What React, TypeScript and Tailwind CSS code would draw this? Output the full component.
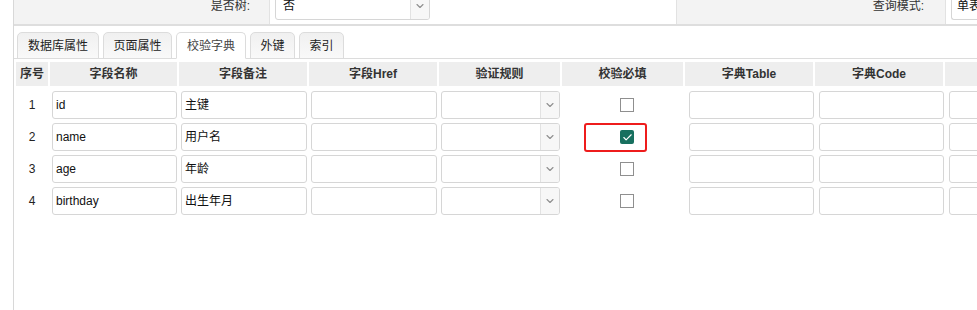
import { ChevronDown, Check } from "lucide-react";

const font = { fontFamily: '"Liberation Sans", "Noto Sans CJK SC", sans-serif' };

const tabs = ["数据库属性", "页面属性", "校验字典", "外键", "索引"];
const tabWidths = ["w-[82px]", "w-[69px]", "w-[70px]", "w-[45px]", "w-[45px]"];

const headers = [
  { label: "序号", w: "w-[32px]" },
  { label: "字段名称", w: "w-[127px]" },
  { label: "字段备注", w: "w-[128px]" },
  { label: "字段Href", w: "w-[128px]" },
  { label: "验证规则", w: "w-[121px]" },
  { label: "校验必填", w: "w-[121px]" },
  { label: "字典Table", w: "w-[128px]" },
  { label: "字典Code", w: "w-[128px]" },
  { label: "", w: "w-[60px]" },
];

const rows = [
  { no: 1, name: "id", remark: "主键", checked: false },
  { no: 2, name: "name", remark: "用户名", checked: true },
  { no: 3, name: "age", remark: "年龄", checked: false },
  { no: 4, name: "birthday", remark: "出生年月", checked: false },
];

function TextBox({ value, className }: { value?: string; className: string }) {
  return (
    <div
      className={`h-[28px] shrink-0 rounded-[3px] border border-[#d6d6d6] bg-white pl-[3px] text-[12px] leading-[26px] text-[#111] ${className}`}
    >
      {value}
    </div>
  );
}

function SelectBox({ value, className }: { value?: string; className: string }) {
  return (
    <div
      className={`flex h-[28px] shrink-0 overflow-hidden rounded-[3px] border border-[#d6d6d6] bg-white ${className}`}
    >
      <div className="flex-1 pl-[7px] text-[12px] leading-[26px] text-[#111]">{value}</div>
      <div className="flex w-[19px] items-center justify-center border-l border-[#e2e2e2] bg-[#f7f7f7]">
        <ChevronDown className="h-[12px] w-[12px] text-[#8e8e8e]" strokeWidth={2.2} />
      </div>
    </div>
  );
}

export default function App() {
  return (
    <div className="flex h-[310px] w-[977px] overflow-hidden bg-white text-[#333]" style={font}>
      <div className="w-[13px] shrink-0" />
      <div className="flex min-w-0 flex-1 flex-col border-l border-[#d8d8d8]">
        {/* top form row */}
        <div className="flex h-[26px] shrink-0 overflow-hidden border-b-2 border-[#dedede]">
          <div className="-mt-[12px] flex h-[36px] w-full items-center">
            <div className="flex h-full w-[255px] shrink-0 items-center justify-end bg-[#f3f3f3] pr-[19px] text-[12px]">
              是否树:
            </div>
            <div className="flex h-full w-[407px] shrink-0 items-center border-l border-[#e2e2e2] pl-[5px]">
              <SelectBox value="否" className="w-[155px]" />
            </div>
            <div className="flex h-full w-[269px] shrink-0 items-center justify-end border-l border-[#e2e2e2] bg-[#f3f3f3] pr-[21px] text-[12px]">
              查询模式:
            </div>
            <div className="flex h-full min-w-0 flex-1 items-center overflow-hidden border-l border-[#e2e2e2] pl-[5px]">
              <div className="h-[28px] w-[60px] shrink-0 rounded-l-[3px] border border-r-0 border-[#d6d6d6] pl-[5px] text-[12px] leading-[26px] text-[#111]">
                单表
              </div>
            </div>
          </div>
        </div>

        {/* tabs */}
        <div className="flex h-[33px] shrink-0 items-end gap-[4px] border-b border-[#dcdcdc] pl-[3px]">
          {tabs.map((t, i) => (
            <div
              key={t}
              className={`-mb-px flex h-[27px] items-center justify-center rounded-t-[5px] border border-[#dcdcdc] text-[12px] ${tabWidths[i]} ${
                i === 2 ? "border-b-white bg-white text-[#444]" : "bg-gradient-to-b from-[#f0f0f0] to-[#f9f9f9] text-[#222]"
              }`}
            >
              {t}
            </div>
          ))}
        </div>

        {/* header */}
        <div className="mt-[3px] flex gap-[2px] pl-[2px]">
          {headers.map((h, i) => (
            <div
              key={i}
              className={`flex h-[24px] shrink-0 items-center justify-center bg-[#eeeeee] text-[12px] font-bold text-[#333] ${h.w}`}
            >
              {h.label}
            </div>
          ))}
        </div>

        {/* body */}
        <div className="mt-[3px] flex flex-col">
          {rows.map((r) => (
            <div key={r.no} className="flex h-[32px] items-center pl-[2px]">
              <div className="w-[32px] shrink-0 text-center text-[12px] text-[#222]">{r.no}</div>
              <TextBox value={r.name} className="ml-[4px] w-[125px]" />
              <TextBox value={r.remark} className="ml-[4px] w-[126px]" />
              <TextBox className="ml-[4px] w-[126px]" />
              <SelectBox className="ml-[4px] w-[119px]" />
              <div className="flex w-[129px] shrink-0 items-center justify-start pl-[24px]">
                <div
                  className={`flex h-[29px] w-[63px] items-center justify-end rounded-[3px] border-2 pr-[11px] ${
                    r.checked ? "border-[#ee1c1c]" : "border-transparent"
                  }`}
                >
                  {r.checked ? (
                    <div className="flex h-[14px] w-[14px] items-center justify-center rounded-[2px] bg-[#17705f]">
                      <Check className="h-[11px] w-[11px] text-white" strokeWidth={2.5} />
                    </div>
                  ) : (
                    <div className="h-[14px] w-[14px] border border-[#8f8f8f] bg-white" />
                  )}
                </div>
              </div>
              <TextBox className="w-[125px]" />
              <TextBox className="ml-[5px] w-[125px]" />
              <TextBox className="ml-[5px] w-[60px]" />
            </div>
          ))}
        </div>
      </div>
    </div>
  );
}
